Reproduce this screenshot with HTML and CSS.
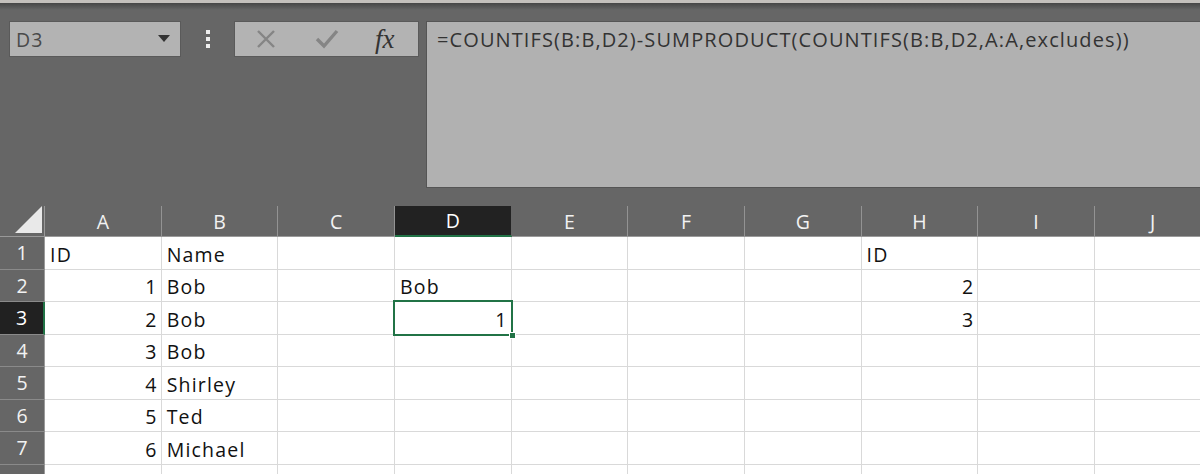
FILE: index.html
```html
<!DOCTYPE html>
<html lang="en">
<head>
  <meta charset="UTF-8"/>
  <title>Sheet</title>
  <link rel="stylesheet" href="styles.css">
</head>
<body>
  <div class="topline"></div>
  <div class="toolbar">
    <div class="namebox">
      <span>D3</span>
      <svg width="12" height="8" viewBox="0 0 12 8"><polygon points="0,0 12,0 6,7" fill="#333"/></svg>
    </div>
    <div class="grip">
      <svg width="4" height="18" viewBox="0 0 4 18"><rect x="0" y="0" width="4" height="4" fill="#eee"/><rect x="0" y="7" width="4" height="4" fill="#eee"/><rect x="0" y="14" width="4" height="4" fill="#eee"/></svg>
    </div>
    <div class="fxbox">
      <svg class="ico" width="22" height="22" viewBox="0 0 22 22"><path d="M3 3 L19 19 M19 3 L3 19" stroke="#858585" stroke-width="2.4" fill="none"/></svg>
      <svg class="ico" width="24" height="22" viewBox="0 0 24 22"><path d="M2 11 L9 18 L22 3" stroke="#858585" stroke-width="3.4" fill="none"/></svg>
      <span class="fx">fx</span>
    </div>
    <div class="formula">=COUNTIFS(B:B,D2)-SUMPRODUCT(COUNTIFS(B:B,D2,A:A,excludes))</div>
  </div>

  <div class="sheet">
    <div class="corner"><svg width="27" height="27" viewBox="0 0 27 27"><polygon points="27,0 27,27 0,27" fill="#e9e9e9"/></svg></div>
    <div class="ch">A</div><div class="ch">B</div><div class="ch">C</div><div class="ch sel">D</div><div class="ch">E</div><div class="ch">F</div><div class="ch">G</div><div class="ch">H</div><div class="ch">I</div><div class="ch">J</div>

    <div class="rh">1</div><div class="c">ID</div><div class="c">Name</div><div class="c"></div><div class="c"></div><div class="c"></div><div class="c"></div><div class="c"></div><div class="c">ID</div><div class="c"></div><div class="c"></div>
    <div class="rh">2</div><div class="c num">1</div><div class="c">Bob</div><div class="c"></div><div class="c">Bob</div><div class="c"></div><div class="c"></div><div class="c"></div><div class="c num">2</div><div class="c"></div><div class="c"></div>
    <div class="rh sel">3</div><div class="c num">2</div><div class="c">Bob</div><div class="c"></div><div class="c num active">1</div><div class="c"></div><div class="c"></div><div class="c"></div><div class="c num">3</div><div class="c"></div><div class="c"></div>
    <div class="rh">4</div><div class="c num">3</div><div class="c">Bob</div><div class="c"></div><div class="c"></div><div class="c"></div><div class="c"></div><div class="c"></div><div class="c"></div><div class="c"></div><div class="c"></div>
    <div class="rh">5</div><div class="c num">4</div><div class="c">Shirley</div><div class="c"></div><div class="c"></div><div class="c"></div><div class="c"></div><div class="c"></div><div class="c"></div><div class="c"></div><div class="c"></div>
    <div class="rh">6</div><div class="c num">5</div><div class="c">Ted</div><div class="c"></div><div class="c"></div><div class="c"></div><div class="c"></div><div class="c"></div><div class="c"></div><div class="c"></div><div class="c"></div>
    <div class="rh">7</div><div class="c num">6</div><div class="c">Michael</div><div class="c"></div><div class="c"></div><div class="c"></div><div class="c"></div><div class="c"></div><div class="c"></div><div class="c"></div><div class="c"></div>
    <div class="rh"></div><div class="c"></div><div class="c"></div><div class="c"></div><div class="c"></div><div class="c"></div><div class="c"></div><div class="c"></div><div class="c"></div><div class="c"></div><div class="c"></div>
  </div>
</body>
</html>
```

FILE: styles.css
```css
*, *::before, *::after { box-sizing: border-box; margin: 0; padding: 0; }
html, body { width: 1200px; height: 474px; overflow: hidden; background: #666; font-family: 'Open Sans', sans-serif; }

.topline { height: 3px; background: #c4c0bc; }
.toolbar {
  display: flex; align-items: flex-start; height: 203px;
  padding: 18px 0 0 9px;
  background: linear-gradient(#464646, #666 7px);
}
.namebox {
  width: 172px; height: 36px; background: #b3b3b3; border: 1px solid #5a5a5a;
  display: flex; align-items: center; justify-content: space-between;
  padding: 0 10px 0 6px; color: #4a4a4a; font-size: 19.5px; letter-spacing: 1px;
}
.grip { width: 53px; height: 36px; display: flex; align-items: center; justify-content: center; }
.fxbox {
  width: 185px; height: 36px; background: #b3b3b3; border: 1px solid #5a5a5a;
  display: flex; align-items: center; padding-left: 20px; gap: 38px;
}
.fx { font-family: 'Liberation Serif', serif; font-style: italic; font-size: 27px; color: #333; margin-left: -2px; }
.formula {
  flex: 1; height: 167px; margin: 0 -10px 0 7px; background: #b1b1b1;
  border: 1px solid #555; padding: 4px 10px; color: #333; font-size: 20px; letter-spacing: 1.1px;
}

.sheet {
  display: grid; grid-template-columns: 45px repeat(10, 116.67px);
  grid-template-rows: 31px repeat(8, 32.5px); width: 1212px;
}
.corner { background: #666; border-right: 1px solid #999; border-bottom: 1px solid #999;
  display: flex; align-items: flex-end; justify-content: flex-end; padding: 0 2px 3px 0; }
.ch {
  background: #666; color: #f2f2f2; font-size: 19.5px; border-right: 1px solid #939393;
  border-bottom: 1px solid #9a9a9a; display: flex; align-items: center; justify-content: center;
}
.ch.sel { background: #222; color: #fff; border-bottom: 2px solid #217346; border-right-color: #666; }
.rh {
  background: #666; color: #f2f2f2; font-size: 19.5px; border-right: 1px solid #9a9a9a;
  border-bottom: 1px solid #8a8a8a; display: flex; align-items: center; justify-content: center;
}
.rh.sel { background: #212121; color: #fff; border-right: 2px solid #217346; }
.c {
  background: #fff; color: #111; font-size: 19.5px; border-right: 1px solid #d9d9d9;
  border-bottom: 1px solid #d9d9d9; display: flex; align-items: flex-end;
  padding: 0 5px 1px; line-height: 26px; white-space: nowrap; letter-spacing: 1.2px;
}
.c.num { justify-content: flex-end; padding-right: 3px; }
.c.active { position: relative; }
.c.active::before {
  content: ''; position: absolute; left: -2px; top: -2px; right: -2px; bottom: -2px;
  border: 2px solid #217346;
}
.c.active::after {
  content: ''; position: absolute; right: -5px; bottom: -5px; width: 7px; height: 7px;
  background: #217346; border: 1px solid #fff;
}
```
